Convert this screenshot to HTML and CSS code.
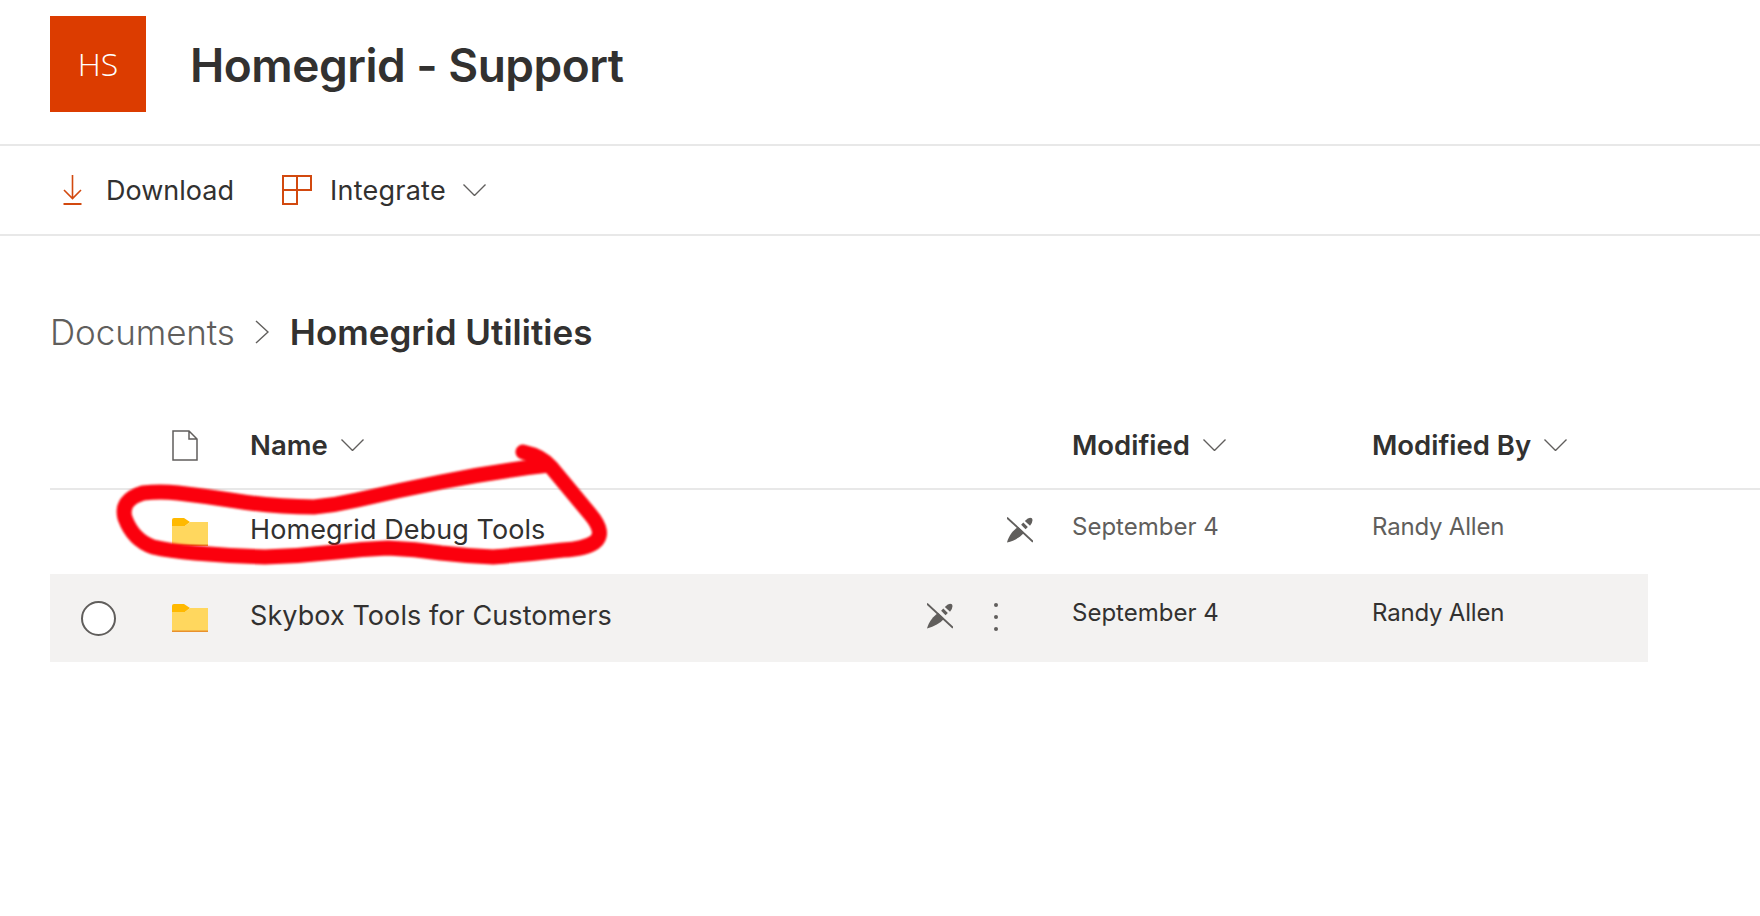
FILE: index.html
```html
<!DOCTYPE html>
<html lang="en">
<head>
  <meta charset="UTF-8">
  <title>Homegrid - Support</title>
  <link rel="stylesheet" href="styles.css">
</head>
<body>
  <svg width="0" height="0" class="defs">
    <symbol id="folder" viewBox="0 0 36 28">
      <path d="M0 2 Q0 0 2 0 H12 L18 4 L13 8 H0 Z" fill="#ffb900"/>
      <path d="M0 8 H13 L18 4 H36 V28 H0 Z" fill="#ffd75e"/>
      <rect y="26.5" width="36" height="1.5" fill="#e8912d"/>
    </symbol>
    <symbol id="pin" viewBox="0 0 70 70">
      <path d="M0 3 L70 68" stroke="#605e5c" stroke-width="5" fill="none"/>
      <path d="M0 70 C5 50 18 36 30 28 L46 44 C35 56 20 65 0 70 Z" fill="#605e5c"/>
      <path d="M38 22 L44 16 L56 28 L50 34 Z" fill="#605e5c"/>
      <path d="M48 12 Q60 0 67 5 Q72 12 62 25 Z" fill="#605e5c"/>
    </symbol>
    <symbol id="chev" viewBox="0 0 23 12">
      <path d="M0.5 0.5 L11.5 11.5 L22.5 0.5" stroke="#605e5c" stroke-width="1.4" fill="none"/>
    </symbol>
  </svg>

  <header class="site-head">
    <div class="logo">HS</div>
    <h1>Homegrid - Support</h1>
  </header>

  <nav class="command-bar">
    <span class="cmd cmd-download">
      <svg class="cmd-icon" width="19" height="30" viewBox="0 0 19 30">
        <path d="M9.5 0 V23 M1 15 L9.5 23.5 L18 15" stroke="#d2490f" stroke-width="1.6" fill="none"/>
        <path d="M0.5 29 H18.5" stroke="#d2490f" stroke-width="2" fill="none"/>
      </svg>
      Download
    </span>
    <span class="cmd cmd-integrate">
      <svg class="cmd-icon" width="30" height="30" viewBox="0 0 30 30">
        <path d="M1 1 H29 V15 H15 V29 H1 Z M1 15 H15 V1" stroke="#d2490f" stroke-width="2" fill="none"/>
      </svg>
      Integrate
      <svg class="chev-lg" width="23" height="12"><use href="#chev"/></svg>
    </span>
  </nav>

  <div class="crumbs">
    <span class="crumb">Documents</span>
    <svg class="crumb-sep" width="14" height="24" viewBox="0 0 14 24">
      <path d="M1 1 L13 12 L1 23" stroke="#605e5c" stroke-width="1.4" fill="none"/>
    </svg>
    <span class="crumb-current">Homegrid Utilities</span>
  </div>

  <section class="list">
    <div class="list-head">
      <span class="col-check"></span>
      <span class="col-type">
        <svg width="26" height="31" viewBox="0 0 26 31">
          <path d="M1 1 H17 L25 9 V30 H1 Z M17 1 V9 H25" stroke="#605e5c" stroke-width="1.5" fill="none"/>
        </svg>
      </span>
      <span class="col-name">Name <svg class="chev" width="23" height="12"><use href="#chev"/></svg></span>
      <span class="col-mod">Modified <svg class="chev" width="23" height="12"><use href="#chev"/></svg></span>
      <span class="col-by">Modified By <svg class="chev" width="23" height="12"><use href="#chev"/></svg></span>
    </div>

    <div class="row row-first">
      <span class="col-check"></span>
      <span class="col-type"><svg class="folder" width="36" height="28"><use href="#folder"/></svg></span>
      <span class="col-name">
        <span class="file-name">Homegrid Debug Tools</span>
        <svg class="pin" width="26" height="27"><use href="#pin"/></svg>
      </span>
      <span class="col-mod meta">September 4</span>
      <span class="col-by meta">Randy Allen</span>
    </div>

    <div class="row row-hover">
      <span class="col-check"><span class="radio"></span></span>
      <span class="col-type"><svg class="folder" width="36" height="28"><use href="#folder"/></svg></span>
      <span class="col-name">
        <span class="file-name">Skybox Tools for Customers</span>
        <svg class="pin" width="26" height="27"><use href="#pin"/></svg>
        <span class="more"><i></i><i></i><i></i></span>
      </span>
      <span class="col-mod meta">September 4</span>
      <span class="col-by meta">Randy Allen</span>
    </div>
  </section>

  <!-- red marker scribble drawn over the first row -->
  <svg class="scribble" width="1760" height="916" viewBox="0 0 1760 916">
    <defs><filter id="soft"><feGaussianBlur stdDeviation="1.3"/></filter></defs>
    <path d="M523 452 Q542 456 551 467 Q570 490 590 514 Q606 533 595 542 Q585 549 563 550 Q530 554 493 557 Q467 556 441 553 Q415 549 388 548 Q362 549 336 552 Q300 556 265 557 Q230 556 195 553 Q170 551 153 547 Q133 540 125 518 Q120 500 143 493 Q160 491 178 493 Q204 496 230 500 Q272 507 314 507 Q336 505 357 500 Q400 490 441 482 Q476 475 511 470 Q530 467 549 465" stroke="#fb0008" stroke-width="15" stroke-linecap="round" stroke-linejoin="round" fill="none" filter="url(#soft)"/>
  </svg>
</body>
</html>
```

FILE: styles.css
```css
* {
  box-sizing: border-box;
}
body {
  margin: 0;
  height: 916px;
  overflow: hidden;
  position: relative;
  background: #fff;
  color: #323130;
  font-family: Inter, "Noto Sans", sans-serif;
}
.defs {
  position: absolute;
}
.site-head {
  display: flex;
  align-items: center;
  height: 146px;
  padding: 16px 0 33px 50px;
  border-bottom: 2px solid #e8e8e8;
}
.logo {
  width: 96px;
  height: 96px;
  background: #dc3c00;
  color: #fff;
  font-family: "Open Sans", sans-serif;
  font-size: 32px;
  font-weight: 300;
  display: flex;
  align-items: center;
  justify-content: center;
}
h1 {
  margin: 2px 0 0 44px;
  font-size: 46px;
  font-weight: 600;
  letter-spacing: -0.5px;
}
.command-bar {
  display: flex;
  align-items: center;
  height: 90px;
  padding: 0 0 0 63px;
  border-bottom: 2px solid #e8e8e8;
  font-size: 27px;
}
.cmd {
  display: flex;
  align-items: center;
}
.cmd-download .cmd-icon {
  margin-right: 24px;
}
.cmd-integrate {
  margin-left: 48px;
  letter-spacing: 0.25px;
}
.cmd-integrate .cmd-icon {
  margin-right: 18px;
}
.chev-lg {
  margin-left: 17px;
}
.crumbs {
  display: flex;
  align-items: center;
  height: 50px;
  margin: 71px 0 0 50px;
}
.crumb {
  font-size: 35px;
  color: #605e5c;
  font-weight: 300;
  letter-spacing: -0.1px;
}
.crumb-sep {
  margin: 0 21px 0 20px;
}
.crumb-current {
  font-size: 35px;
  font-weight: 600;
}
.list {
  margin: 46px 0 0 50px;
}
.list-head,
.row {
  display: grid;
  grid-template-columns: 122px 78px 822px 300px 1fr;
  align-items: center;
}
.list-head {
  height: 87px;
  padding-bottom: 1px;
  border-bottom: 2px solid #e8e8e8;
  font-size: 27.5px;
  font-weight: 600;
}
.list-head .col-name,
.list-head .col-mod,
.list-head .col-by {
  display: flex;
  align-items: center;
  gap: 13px;
}
.row {
  width: 1598px;
  font-size: 27px;
}
.row-first {
  height: 84px;
}
.row-hover {
  height: 88px;
  background: #f3f2f1;
}
.col-check {
  display: flex;
  padding-left: 31px;
}
.col-type {
  display: flex;
}
.col-name {
  display: flex;
  align-items: center;
}
.file-name {
  flex: 1;
  margin-bottom: 5px;
  letter-spacing: 0.08px;
}
.pin {
  margin: 0 39px 5px 0;
}
.row-hover .pin {
  margin-right: 41px;
}
.more {
  margin: 0 74px 2px 0;
  display: flex;
  flex-direction: column;
  gap: 8px;
}
.more i {
  width: 4px;
  height: 4px;
  border-radius: 50%;
  background: #605e5c;
}
.meta {
  font-size: 24px;
  margin-bottom: 11px;
}
.col-by.meta {
  letter-spacing: -0.2px;
}
.row .meta {
  color: #605e5c;
}
.row-hover .meta {
  color: #323130;
}
.radio {
  width: 35px;
  height: 35px;
  border: 2px solid #605e5c;
  border-radius: 50%;
  background: #fff;
}
.scribble {
  position: absolute;
  left: 0;
  top: 0;
  pointer-events: none;
}
```
